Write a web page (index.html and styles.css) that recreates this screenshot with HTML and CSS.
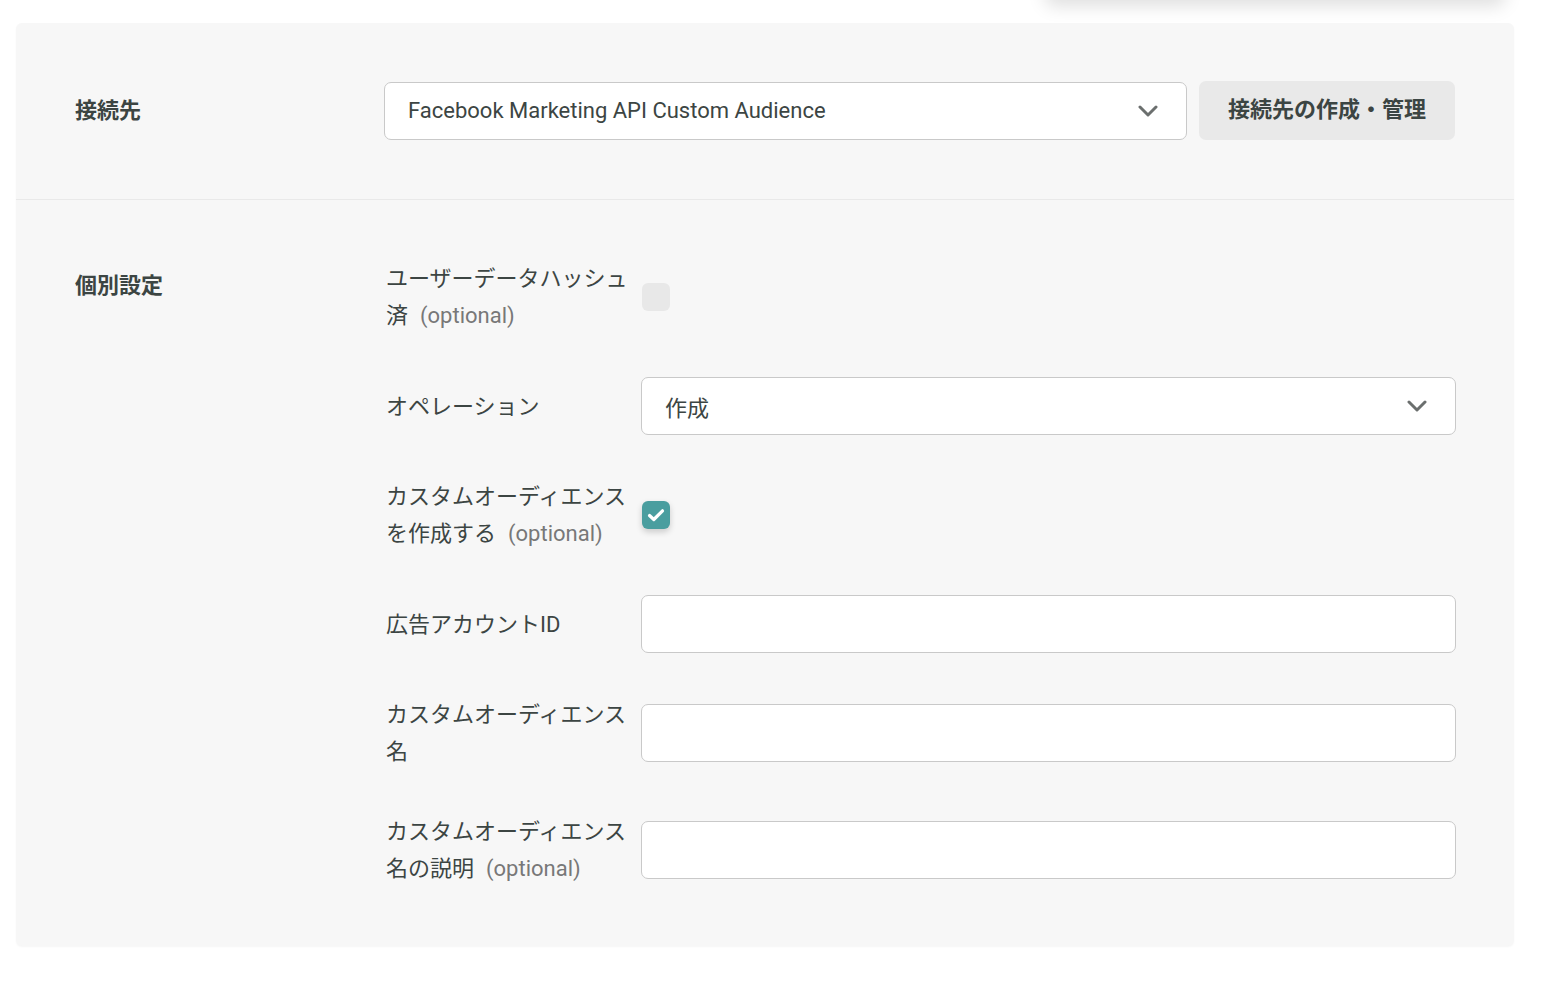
FILE: index.html
```html
<!DOCTYPE html>
<html lang="ja">
<head>
<meta charset="utf-8">
<title>設定</title>
<link rel="stylesheet" href="styles.css">
</head>
<body>
<div class="overlay-shadow"></div>
<div class="panel">
  <section class="section sec-conn">
    <div class="sec-label">接続先</div>
    <div class="sec-body conn-body">
      <div class="select grow">
        <span class="select-text">Facebook Marketing API Custom Audience</span>
        <svg class="chev" width="20" height="12" viewBox="0 0 20 12"><path d="M2 2 L10 10 L18 2" fill="none" stroke="#6b6f6e" stroke-width="3" stroke-linecap="round" stroke-linejoin="round"/></svg>
      </div>
      <button class="btn">接続先の作成・管理</button>
    </div>
  </section>
  <section class="section sec-indiv">
    <div class="sec-label label-top">個別設定</div>
    <div class="sec-body rows">
      <div class="row">
        <div class="field-label">ユーザーデータハッシュ済<span class="opt">(optional)</span></div>
        <div class="control"><span class="cb"></span></div>
      </div>
      <div class="row">
        <div class="field-label">オペレーション</div>
        <div class="control">
          <div class="select">
            <span class="select-text">作成</span>
            <svg class="chev" width="20" height="12" viewBox="0 0 20 12"><path d="M2 2 L10 10 L18 2" fill="none" stroke="#6b6f6e" stroke-width="3" stroke-linecap="round" stroke-linejoin="round"/></svg>
          </div>
        </div>
      </div>
      <div class="row">
        <div class="field-label">カスタムオーディエンスを作成する<span class="opt">(optional)</span></div>
        <div class="control"><span class="cb checked"><svg width="18" height="14" viewBox="0 0 18 14"><path d="M2.5 7.5 L6.8 11.5 L15.5 2.8" fill="none" stroke="#fff" stroke-width="3.2" stroke-linecap="round" stroke-linejoin="round"/></svg></span></div>
      </div>
      <div class="row">
        <div class="field-label">広告アカウントID</div>
        <div class="control"><div class="input"></div></div>
      </div>
      <div class="row">
        <div class="field-label">カスタムオーディエンス名</div>
        <div class="control"><div class="input"></div></div>
      </div>
      <div class="row">
        <div class="field-label">カスタムオーディエンス名の説明<span class="opt">(optional)</span></div>
        <div class="control"><div class="input"></div></div>
      </div>
    </div>
  </section>
</div>
</body>
</html>
```

FILE: styles.css
```css
* { box-sizing: border-box; }
html, body { margin: 0; padding: 0; background: #fff; }
body {
  font-family: Roboto, "Noto Sans CJK JP", sans-serif;
  font-size: 22px;
  color: #3c4543;
  padding: 23px 30px 36px 16px;
  position: relative;
  overflow: hidden;
  height: 982px;
}
.overlay-shadow {
  position: absolute;
  left: 1045px;
  top: -80px;
  width: 460px;
  height: 80px;
  background: #fff;
  border-radius: 8px;
  box-shadow: 0 6px 18px rgba(0,0,0,0.13);
}
.panel {
  background: #f7f7f7;
  border-radius: 6px;
  width: 1498px;
  box-shadow: 0 1px 2px rgba(0,0,0,0.04);
}
.section {
  display: flex;
  padding: 59px;
}
.sec-conn {
  align-items: center;
  border-bottom: 1px solid #e9e9e9;
  padding-top: 58px;
  padding-bottom: 59px;
}
.sec-indiv {
  padding-top: 60px;
  padding-bottom: 59px;
  padding-right: 58px;
}
.sec-label {
  width: 309px;
  flex: none;
  font-weight: 700;
  line-height: 30px;
}
.label-top { line-height: 52px; }
.sec-body { flex: 1; min-width: 0; }
.conn-body { display: flex; gap: 12px; align-items: center; }
.grow { flex: 1; }
.select {
  height: 58px;
  background: #fff;
  border: 1.5px solid #c9c9c9;
  border-radius: 7px;
  display: flex;
  align-items: center;
  padding: 0 28px 0 23px;
}
.select-text { flex: 1; white-space: nowrap; }
.chev { flex: none; }
.btn {
  font: inherit;
  font-weight: 700;
  line-height: 1;
  color: #3c4543;
  background: #e9e9e9;
  border: none;
  border-radius: 7px;
  height: 59px;
  padding: 0 29px 2px;
  white-space: nowrap;
}
.rows { display: flex; flex-direction: column; gap: 43px; }
.row { display: flex; align-items: center; gap: 12px; }
.field-label {
  width: 245px;
  flex: none;
  line-height: 37px;
  padding-left: 2px;
}
.opt { color: #787878; margin-left: 12px; }
.control { flex: 1; min-width: 0; display: flex; align-items: center; }
.control .select { flex: 1; height: 58px; }
.input {
  flex: 1;
  height: 58px;
  background: #fff;
  border: 1.5px solid #c9c9c9;
  border-radius: 7px;
}
.cb {
  width: 28px;
  height: 28px;
  border-radius: 6px;
  background: #e8e8e8;
  display: flex;
  align-items: center;
  justify-content: center;
  margin-left: 1px;
}
.cb.checked {
  background: #4a9e9f;
  box-shadow: 0 3px 6px rgba(0,0,0,0.18);
}
```
